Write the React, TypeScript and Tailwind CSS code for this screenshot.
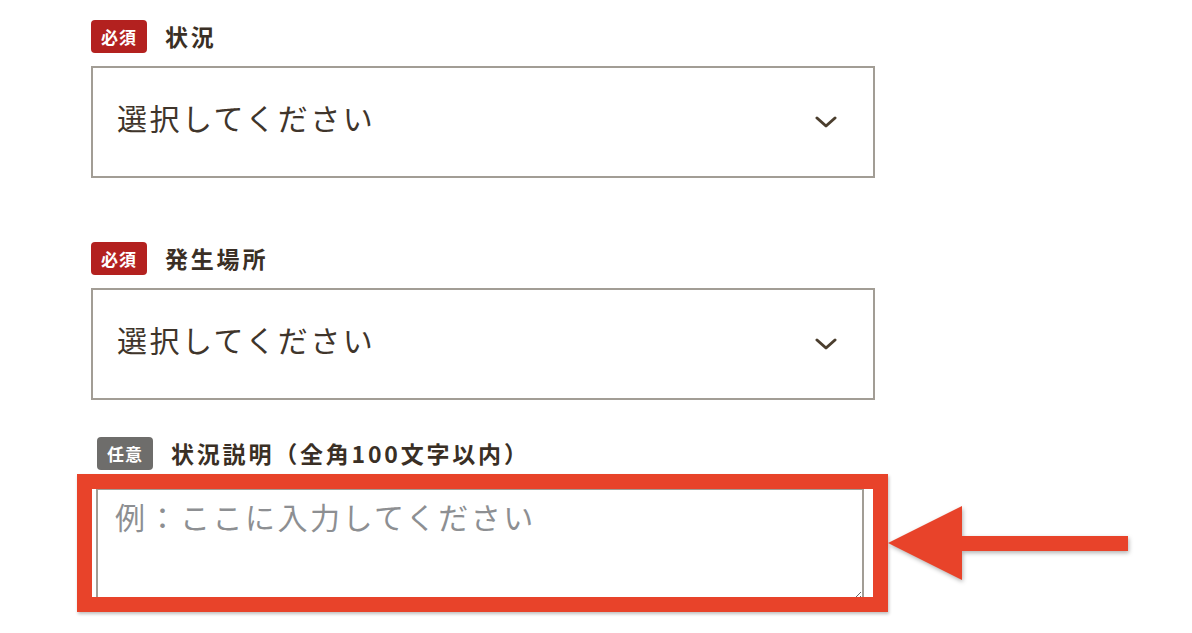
import React from "react";

function Badge({ label, tone }: { label: string; tone: "required" | "optional" }) {
  return (
    <span
      className={
        tone === "required"
          ? "flex h-[33px] w-[56px] items-center justify-center rounded-[4px] bg-[#b3211f] text-[17px] font-bold leading-none tracking-[1px] text-white"
          : "flex h-[33px] w-[56px] items-center justify-center rounded-[4px] bg-[#6e6d6b] text-[17px] font-bold leading-none tracking-[1px] text-white"
      }
    >
      {label}
    </span>
  );
}

function FieldLabel({ text, tone }: { text: string; tone: "required" | "optional" }) {
  return (
    <div className="flex h-[33px] items-center gap-[18px]">
      <Badge label={tone === "required" ? "必須" : "任意"} tone={tone} />
      <span className="text-[23px] font-bold leading-none tracking-[2.8px] text-[#3a2f25]">{text}</span>
    </div>
  );
}

function SelectBox() {
  return (
    <div className="flex h-[112px] w-[784px] items-center justify-between border-2 border-[#a29d95] bg-white pl-[24px] pr-[36px]">
      <span className="pb-[10px] text-[30px] leading-none tracking-[2.5px] text-[#3f352b]">選択してください</span>
      <svg width="22" height="12" viewBox="0 0 22 12" fill="none">
        <polyline
          points="2,2 11,10 20,2"
          stroke="#4b3e2e"
          strokeWidth="3"
          strokeLinecap="round"
          strokeLinejoin="round"
        />
      </svg>
    </div>
  );
}

export default function App() {
  return (
    <div className="relative h-[633px] w-[1192px] overflow-hidden bg-white font-['Noto_Sans_CJK_JP','Noto_Sans',sans-serif]">
      <div className="flex flex-col pl-[91px] pt-[20px]">
        {/* 状況 */}
        <FieldLabel text="状況" tone="required" />
        <div className="mt-[13px]">
          <SelectBox />
        </div>

        {/* 発生場所 */}
        <div className="mt-[64px]">
          <FieldLabel text="発生場所" tone="required" />
        </div>
        <div className="mt-[13px]">
          <SelectBox />
        </div>

        {/* 状況説明 */}
        <div className="ml-[6px] mt-[37px]">
          <FieldLabel text="状況説明（全角100文字以内）" tone="optional" />
          <textarea
            readOnly
            placeholder="例：ここに入力してください"
            className="mt-[18px] -ml-[1px] block h-[114px] w-[768px] border-2 border-[#a29d95] bg-white px-[17px] pt-[5px] text-[30px] leading-[1.4] tracking-[2.5px] text-[#3f352b] outline-none placeholder:text-[#8d8f92]"
          />
        </div>
      </div>

      {/* highlight frame */}
      <div className="pointer-events-none absolute left-[77px] top-[474px] h-[138px] w-[811px] border-[15px] border-[#e8432a] shadow-[1px_2px_3px_rgba(0,0,0,0.25)]" />

      {/* arrow */}
      <svg
        className="pointer-events-none absolute left-[880px] top-[496px] drop-shadow-[1px_2px_2px_rgba(0,0,0,0.3)]"
        width="260"
        height="96"
        viewBox="0 0 260 96"
      >
        <polygon points="8,47 82,10 82,40 248,40 248,55 82,55 82,84" fill="#e8432a" />
      </svg>
    </div>
  );
}
